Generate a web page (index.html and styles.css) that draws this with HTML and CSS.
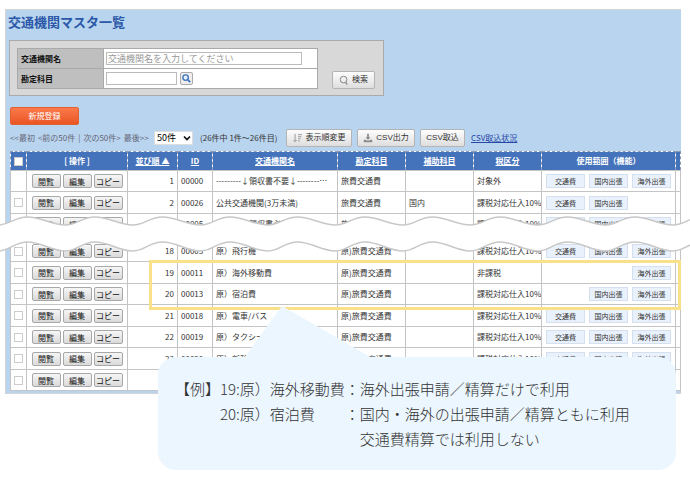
FILE: index.html
```
<!DOCTYPE html>
<html lang="ja">
<head>
<meta charset="utf-8">
<title>交通機関マスタ一覧</title>
<link rel="stylesheet" href="styles.css">
</head>
<body>
<main class="screen">
  <h1>交通機関マスタ一覧</h1>

  <form class="search">
    <div class="fields">
      <label for="name">交通機関名</label>
      <div class="field"><input id="name" class="wide" type="text" placeholder="交通機関名を入力してください"></div>
      <label for="account">勘定科目</label>
      <div class="field">
        <input id="account" class="short" type="text">
        <button type="button" class="lookup" aria-label="勘定科目を検索">
          <svg viewBox="0 0 12 12"><circle cx="5" cy="5" r="3" fill="#e4effb" stroke="#3f74bd" stroke-width="1.5"/><path d="M7.5 7.5 10 10" stroke="#3f74bd" stroke-width="2"/></svg>
        </button>
      </div>
    </div>
    <button type="button" class="btn find"><svg viewBox="0 0 12 12"><circle cx="5.500" cy="5.500" r="4" fill="none" stroke="#888" stroke-width="1.200"/><path d="M8 9 10 11.500" stroke="#888" stroke-width="1.500"/></svg>検索</button>
  </form>

  <button type="button" class="create">新規登録</button>

  <div class="toolbar">
    <nav class="pager"><span>&lt;&lt;最初</span><span>&lt;前の50件</span><span>|</span><span>次の50件&gt;</span><span>最後&gt;&gt;</span></nav>
    <div class="size">
      <select aria-label="表示件数"><option>50件</option></select>
      <svg viewBox="0 0 8 6"><path d="M1 1.500 4 4.500 7 1.500" fill="none" stroke="#111" stroke-width="1.700"/></svg>
    </div>
    <span class="count">(26件中 1件～26件目)</span>
    <button type="button" class="btn order"><svg viewBox="0 0 12 12"><path d="M2.500 1v9M.5 8.500l2 2 2-2M6 2h5M6 4.500h4M6 7h3M6 9.500h2" fill="none" stroke="#888"/></svg>表示順変更</button>
    <button type="button" class="btn export"><svg viewBox="0 0 12 12"><path d="M5 1h2v4h2L6 8 3 5h2zM1 8h2l1 1h4l1-1h2v3H1z" fill="#888"/></svg>CSV出力</button>
    <button type="button" class="btn import">CSV取込</button>
    <a class="status" href="#">CSV取込状況</a>
  </div>

  <div class="list">
    <table>
      <colgroup><col class="c-check"><col class="c-ops"><col class="c-order"><col class="c-id"><col><col class="c-account"><col class="c-sub"><col class="c-tax"><col class="c-scope"><col class="c-end"></colgroup>
      <thead>
        <tr><th><input type="checkbox" aria-label="すべて選択"></th><th>[ 操作 ]</th><th><a href="#">並び順 ▲</a></th><th><a href="#">ID</a></th><th><a href="#">交通機関名</a></th><th><a href="#">勘定科目</a></th><th><a href="#">補助科目</a></th><th><a href="#">税区分</a></th><th>使用範囲（機能）</th><th></th></tr>
      </thead>
      <tbody id="rows"></tbody>
    </table>
    <div class="focus"></div>
    <svg class="tear" id="tear" viewBox="0 0 690 40" preserveAspectRatio="none"></svg>
  </div>
</main>

<aside class="callout">
  <svg class="pointer" viewBox="0 0 128 52"><path d="M38 0 128 52H0z" fill="#ebf6ff"/></svg>
  <div class="notes">
    <span>【例】</span><span>19:原）海外移動費：</span><span>海外出張申請／精算だけで利用</span>
    <span></span><span>20:原）宿泊費　　：</span><span>国内・海外の出張申請／精算ともに利用</span>
    <span></span><span></span><span>交通費精算では利用しない</span>
  </div>
</aside>
<script src="app.js"></script>
</body>
</html>
```
FILE: styles.css
```
* { box-sizing: border-box; }

body {
  margin: 0;
  background: #fff;
  color: #333;
  font: 8px/12px "Noto Sans CJK JP", sans-serif;
}

button, input, select { margin: 0; font: inherit; color: inherit; }
input, select { border: 1px solid #bbb; background: #fff; }

.screen {
  margin: 9px 9px 0 5px;
  padding: 3px 0 2px 4px;
  border: 1px solid #d4d4d4;
  border-right: 0;
  background: #b8d4ee;
}

h1 {
  margin: 0 0 10px -2px;
  font-size: 13px;
  line-height: 17px;
  color: #2b58a8;
}

.search {
  display: flex;
  align-items: flex-end;
  gap: 14px;
  width: fit-content;
  margin-left: -1px;
  padding: 7px 8px 6px 7px;
  border: 1px solid #aaa;
  background: #d8d8d8;
}

.fields {
  display: grid;
  grid-template-columns: 86px 213px;
  gap: 1px 0;
  border: 1px solid #aaa;
  background: #aaa;
}

.fields label {
  padding: 4px 3px 3px;
  border-right: 1px solid #aaa;
  background: #bfbfbf;
  font-weight: bold;
  color: #111;
}

.field {
  display: flex;
  align-items: center;
  gap: 3px;
  padding: 0 2px;
  background: #fff;
}

.field input { height: 13px; padding: 0 1px; }
.wide { width: 196px; font-size: 9px; }
.wide::placeholder { color: #999; }
.short { width: 71px; }

.lookup {
  display: flex;
  width: 13px;
  height: 13px;
  padding: 0;
  border: 1px solid #aaa;
  border-radius: 2px;
  background: #eee;
}

.btn {
  display: flex;
  align-items: center;
  justify-content: center;
  gap: 3px;
  height: 18px;
  padding: 0;
  border: 1px solid #b4b4b4;
  border-radius: 2px;
  background: linear-gradient(#fdfdfd, #dedede);
  font-family: "Liberation Sans", "Noto Sans CJK JP", sans-serif;
  white-space: nowrap;
}

.btn svg { width: 10px; height: 10px; }
.find { width: 43px; }
.order { width: 66px; margin-left: 8px; }
.export { width: 58px; margin-left: 5px; }
.import { width: 45px; margin-left: 5px; }

.create {
  display: block;
  width: 69px;
  height: 18px;
  margin-top: 11px;
  padding: 0;
  border: 1px solid #e0602f;
  border-radius: 2px;
  background: linear-gradient(#fb7a4c, #ea5524);
  color: #fff;
}

.toolbar {
  display: flex;
  align-items: center;
  margin-top: 4px;
  white-space: nowrap;
}

.pager { display: flex; gap: 3px; width: 144px; color: #667; }
.size { position: relative; width: 39px; height: 14px; }
.size select {
  display: block;
  appearance: none;
  width: 100%;
  height: 14px;
  padding: 0 2px;
  border-color: #ddd;
  color: #000;
  font-size: 9px;
  line-height: 12px;
}
.size svg { position: absolute; top: 4px; right: 2px; width: 8px; height: 6px; pointer-events: none; }
.count { width: 78px; margin-left: 7px; }
.status { margin-left: 6px; color: #2447a8; }

.list { position: relative; margin-top: 4px; }

table { width: 100%; table-layout: fixed; border-collapse: collapse; background: #fff; }
.c-check { width: 16px; }
.c-ops { width: 101px; }
.c-order { width: 50px; }
.c-id { width: 35px; }
.c-account, .c-sub { width: 68px; }
.c-tax { width: 68px; }
.c-scope { width: 134px; }
.c-end { width: 5px; }

th, td { padding: 0 3px; border: 1px solid #c4c4c4; white-space: nowrap; overflow: hidden; }
th { height: 19px; padding: 0; border-style: dashed; border-color: #8a9cb8; background: #4573bb; color: #fff; }
th a { color: #fff; }
td { height: 21px; text-align: left; }
tr:nth-child(even) td { height: 22px; }
td:first-child { padding: 0; text-align: center; }
td.num { text-align: right; }
td.tax { padding-right: 0; }
tr.gap td { height: 6px; }

input[type="checkbox"] {
  display: block;
  appearance: none;
  width: 9px;
  height: 9px;
  margin: 0 auto;
  border: 1px solid #ccc;
  background: #fff;
}

.ops { display: flex; justify-content: center; gap: 2px; }
.ops button {
  width: 29px;
  height: 14px;
  padding: 0;
  border: 1px solid #a8a8a8;
  border-radius: 2px;
  background: linear-gradient(#f6f6f6, #dadada);
  color: #111;
  line-height: 11px;
}

.tags { display: grid; grid-template-columns: repeat(3, 1fr); gap: 4px; padding: 0 1px; }
.tags span {
  height: 14px;
  border: 1px solid #d4e0ee;
  background: #e9f2fc;
  font-size: 7px;
  text-align: center;
}
.road { grid-column: 1; }
.home { grid-column: 2; }
.abroad { grid-column: 3; }

.focus {
  position: absolute;
  top: 109px;
  left: 139px;
  right: 0;
  height: 50px;
  border: 3px solid #fbe08a;
}

.tear {
  position: absolute;
  top: 62px;
  left: -10px;
  width: calc(100% + 19px);
  height: 40px;
}

.callout {
  position: relative;
  margin: -37px 14px 0 158px;
  padding: 19px 15px 19px 17px;
  border-radius: 18px;
  background: #ebf6ff;
  color: #333;
  font-size: 15px;
  font-weight: 300;
  line-height: 25px;
}

.pointer { position: absolute; top: -51px; left: 86px; width: 128px; height: 52px; }
.notes { display: grid; grid-template-columns: auto auto 1fr; white-space: nowrap; }
```
FILE: app.js
```
const HIRE = "原)旅費交通費";
const TAXED = "課税対応仕入10%";
const ALL = ["road", "home", "abroad"];
const TAGS = { road: "交通費", home: "国内出張", abroad: "海外出張" };

const rows = [
  [1, "00000", "---------↓領収書不要↓--------…", "旅費交通費", "", "対象外", ALL],
  [2, "00026", "公共交通機関(3万未満)", "旅費交通費", "国内", TAXED, ["road", "home"]],
  [3, "00005", "---------↓領収書必要↓--------…", "旅費交通費", "", TAXED, ALL],
  null,
  [18, "00003", "原）飛行機", HIRE, "", TAXED, ALL],
  [19, "00011", "原）海外移動費", HIRE, "", "非課税", ["abroad"]],
  [20, "00013", "原）宿泊費", HIRE, "", TAXED, ["home", "abroad"]],
  [21, "00018", "原）電車/バス", HIRE, "", TAXED, ALL],
  [22, "00019", "原）タクシー", HIRE, "", TAXED, ALL],
  [23, "00020", "原）新幹線", HIRE, "", TAXED, ALL],
  ["", "", "", "", "", "", []],
];

document.getElementById("rows").innerHTML = rows.map((row) => {
  if (!row) return '<tr class="gap"><td colspan="10"></td></tr>';
  const [order, id, name, account, sub, tax, scope] = row;
  const check = order === 1 ? "" : '<input type="checkbox" aria-label="選択">';
  const tags = scope.map((key) => `<span class="${key}">${TAGS[key]}</span>`).join("");
  return `<tr><td>${check}</td>
    <td><div class="ops"><button type="button">閲覧</button><button type="button">編集</button><button type="button">コピー</button></div></td>
    <td class="num">${order}</td><td>${id}</td><td>${name}</td><td>${account}</td><td>${sub}</td><td class="tax">${tax}</td>
    <td><div class="tags">${tags}</div></td><td></td></tr>`;
}).join("");

// Two parallel waves with a white band between them.
function wave(top, bottom) {
  const period = 67.5;
  let d = `M-40 ${top}`;
  for (let x = -40; x < 690; x += period) {
    d += `C${x + 14} ${top} ${x + 24} ${bottom} ${x + 38} ${bottom}`;
    d += `C${x + 50} ${bottom} ${x + 54} ${top} ${x + period} ${top}`;
  }
  return d;
}
const upper = wave(4, 12);
const lower = wave(29, 38);
document.getElementById("tear").innerHTML =
  `<clipPath id="below"><path d="${upper}V60H-40Z"/></clipPath>
   <path d="${lower}V-40H-40Z" fill="#fff" clip-path="url(#below)"/>
   <path d="${upper}" fill="none" stroke="#c8c8c8" stroke-width="1.5"/>
   <path d="${lower}" fill="none" stroke="#c8c8c8" stroke-width="1.5"/>`;
```
